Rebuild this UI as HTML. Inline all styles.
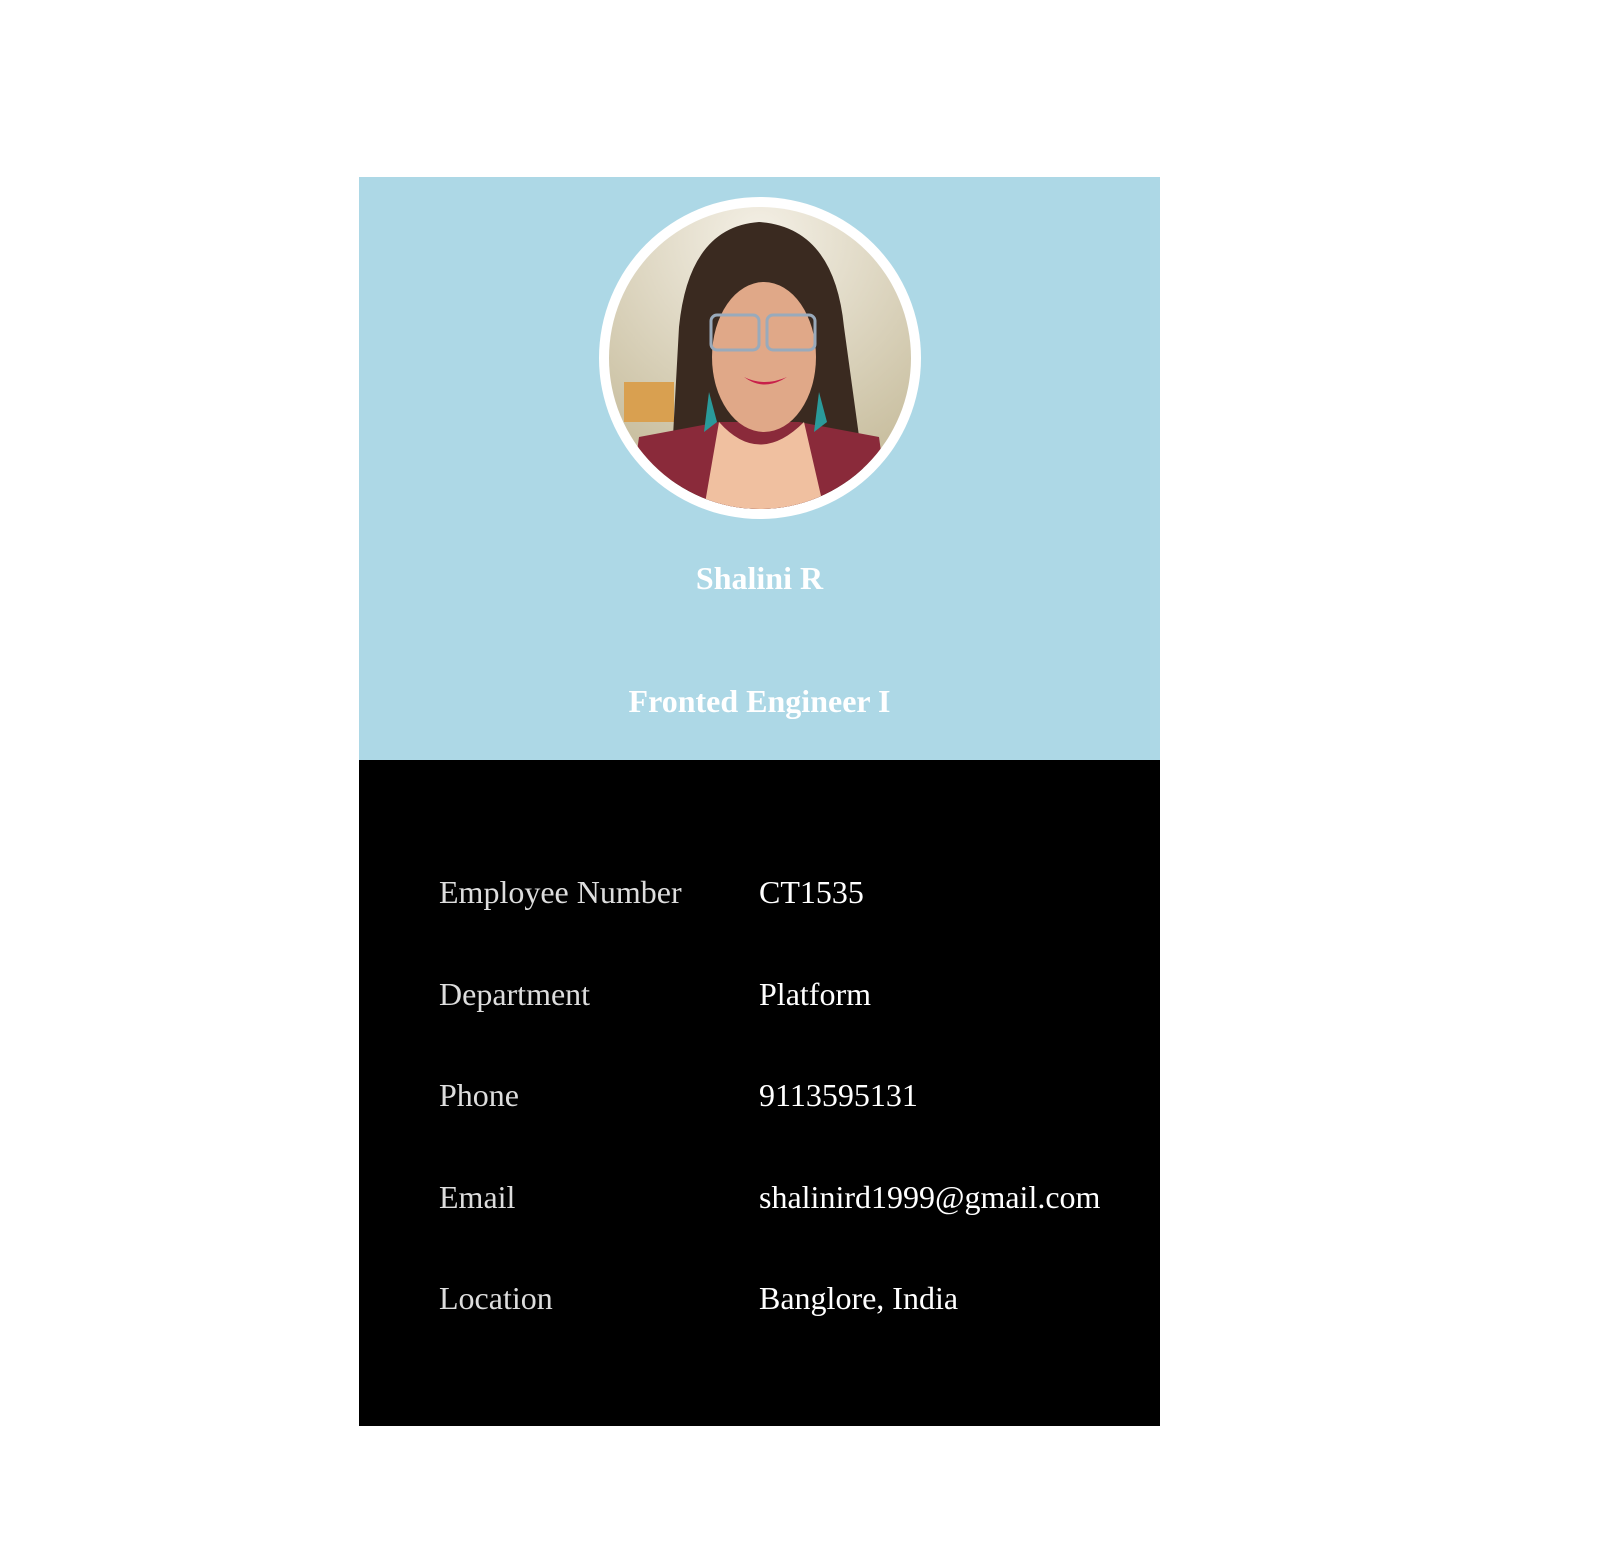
<!DOCTYPE html>
<html><head><style>
body{margin:0;background:#fff;width:1618px;height:1546px;position:relative;font-family:"Liberation Serif",serif;}
.card{position:absolute;left:359px;top:177px;width:801px;height:1249px;}
.top{position:absolute;left:0;top:0;width:801px;height:583px;background:#add8e6;}
.bot{position:absolute;left:0;top:583px;width:801px;height:666px;background:#000;}
.av{position:absolute;left:240px;top:20px;width:322px;height:322px;border-radius:50%;background:#fff;}
.av svg{position:absolute;left:10px;top:10px;}
.t{position:absolute;left:0;width:801px;text-align:center;color:#fff;font-weight:bold;font-size:32px;}
.l,.v{position:absolute;font-size:32px;}
.l{left:80px;color:#ddd}.v{left:400px;color:#fff}
</style></head><body>
<div class="card">
<div class="top">
<div class="av"><svg width="302" height="302" viewBox="0 0 302 302">
<defs><clipPath id="c"><circle cx="151" cy="151" r="151"/></clipPath>
<radialGradient id="bg" cx="0.5" cy="0.1" r="0.8"><stop offset="0" stop-color="#f4f0e6"/><stop offset="1" stop-color="#c9bfa0"/></radialGradient></defs>
<g clip-path="url(#c)">
<rect width="302" height="302" fill="url(#bg)"/>
<rect x="15" y="175" width="50" height="40" fill="#d9a050"/>
<path d="M60 302 L70 120 Q80 20 150 15 Q225 20 235 120 L260 302 Z" fill="#3a2a20"/>
<path d="M20 302 L30 230 L110 215 L190 215 L270 230 L280 302 Z" fill="#8a2a3a"/>
<ellipse cx="155" cy="150" rx="52" ry="75" fill="#e0a888"/>
<path d="M110 215 Q150 260 195 215 L215 302 L95 302 Z" fill="#f0c0a0"/>
<rect x="102" y="108" width="48" height="35" rx="6" fill="none" stroke="#9ab" stroke-width="3"/>
<rect x="158" y="108" width="48" height="35" rx="6" fill="none" stroke="#9ab" stroke-width="3"/>
<path d="M135 170 Q155 180 178 170 Q155 185 135 170Z" fill="#c8204a"/>
<path d="M100 185 L95 225 L108 215Z M210 185 L205 225 L218 215Z" fill="#2a9a9a"/>
</g></svg></div>
<div class="t" style="top:383px">Shalini R</div>
<div class="t" style="top:506px">Fronted Engineer I</div>
</div>
<div class="bot">
<div class="l" style="top:114px">Employee Number</div><div class="v" style="top:114px">CT1535</div>
<div class="l" style="top:216px">Department</div><div class="v" style="top:216px">Platform</div>
<div class="l" style="top:317px">Phone</div><div class="v" style="top:317px">9113595131</div>
<div class="l" style="top:419px">Email</div><div class="v" style="top:419px">shalinird1999@gmail.com</div>
<div class="l" style="top:520px">Location</div><div class="v" style="top:520px">Banglore, India</div>
</div>
</div>
</body></html>
